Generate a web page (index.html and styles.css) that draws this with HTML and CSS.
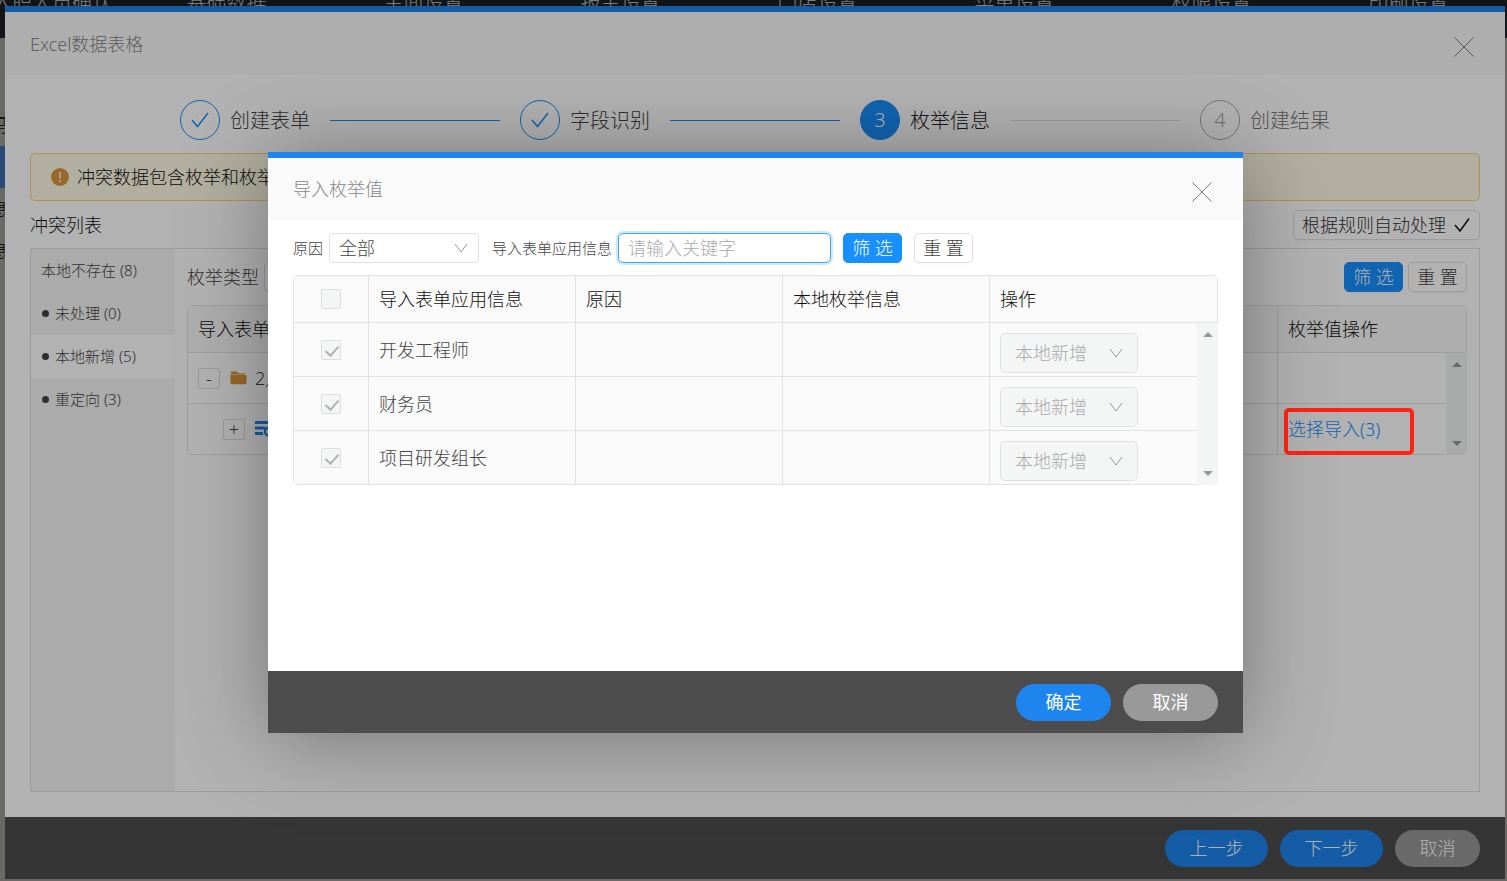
FILE: index.html
```html
<!DOCTYPE html>
<html lang="zh-CN">
<head>
    <meta charset="UTF-8">
    <meta name="viewport" content="width=device-width, initial-scale=1.0">
    <title>Excel数据表格</title>
    <link rel="stylesheet" href="styles.css">
</head>
<body>
    <!-- page under the dialogs -->
    <div class="page">
        <nav class="topnav">
            <a href="#" class="first">入职人员确认</a>
            <a href="#">基础数据</a>
            <a href="#">主面设置</a>
            <a href="#">报主设置</a>
            <a href="#">门店设置</a>
            <a href="#">菜单设置</a>
            <a href="#">权限设置</a>
            <a href="#">印刷设置</a>
        </nav>
        <ul class="page-side">
            <li>码</li>
            <li class="on"></li>
            <li>息</li>
            <li>息</li>
        </ul>
    </div>
    <div class="mask"></div>

    <!-- import wizard -->
    <div class="dialog wizard">
        <div class="dialog-head">
            <h2>Excel数据表格</h2>
            <button class="close" aria-label="关闭">
                <svg viewBox="0 0 20 20"><path d="M0.500 0.500 L19.500 19.500 M19.500 0.500 L0.500 19.500"/></svg>
            </button>
        </div>
        <div class="dialog-body">
            <ol class="steps">
                <li class="step done">
                    <span class="step-icon"><svg viewBox="0 0 20 20"><path d="M2 10 L7.500 16.500 L18 3"/></svg></span>
                    <span class="step-title">创建表单</span>
                </li>
                <li class="step done">
                    <span class="step-icon"><svg viewBox="0 0 20 20"><path d="M2 10 L7.500 16.500 L18 3"/></svg></span>
                    <span class="step-title">字段识别</span>
                </li>
                <li class="step active">
                    <span class="step-icon">3</span>
                    <span class="step-title">枚举信息</span>
                </li>
                <li class="step wait">
                    <span class="step-icon">4</span>
                    <span class="step-title">创建结果</span>
                </li>
            </ol>

            <div class="alert">
                <svg viewBox="0 0 18 18"><circle cx="9" cy="9" r="9" fill="#d9953b"/><path d="M9 4v6.500M9 12v2" stroke="#fffbe6" stroke-width="1.600"/></svg>
                冲突数据包含枚举和枚举值
            </div>

            <div class="list-head">
                <h3>冲突列表</h3>
                <button class="btn auto">根据规则自动处理
                    <svg viewBox="0 0 16 16"><path d="M1 8 L6 14 L15 1.500"/></svg>
                </button>
            </div>

            <div class="panel">
                <ul class="side">
                    <li>本地不存在 (8)</li>
                    <li class="sub">未处理 (0)</li>
                    <li class="sub on">本地新增 (5)</li>
                    <li class="sub">重定向 (3)</li>
                </ul>
                <div class="content">
                    <div class="filter">
                        <label for="enumType">枚举类型</label>
                        <select id="enumType" class="type-select"><option></option></select>
                        <button class="btn primary push">筛 选</button>
                        <button class="btn">重 置</button>
                    </div>
                    <table class="grid tree">
                        <colgroup><col><col class="c-op"><col class="c-scroll"></colgroup>
                        <thead>
                            <tr><th>导入表单</th><th colspan="2">枚举值操作</th></tr>
                        </thead>
                        <tbody>
                            <tr>
                                <td>
                                    <div class="node">
                                        <button class="toggle">-</button>
                                        <svg class="folder" viewBox="0 0 18 14"><path d="M1 0h6l2 2h7v1H1z M1.500 3.500H16a1.500 1.500 0 0 1 1.500 1.500v7a1.500 1.500 0 0 1-1.500 1.500H2A1.500 1.500 0 0 1 .5 12V4z" fill="#d9953b"/></svg>
                                        <span>2月</span>
                                    </div>
                                </td>
                                <td></td>
                                <td rowspan="2" class="scroll"><div class="bar"><i class="up"></i><i class="down"></i></div></td>
                            </tr>
                            <tr>
                                <td>
                                    <div class="node child">
                                        <button class="toggle">+</button>
                                        <svg class="find" viewBox="0 0 20 16"><path d="M0 1.500h18M0 7h10M0 12.500h8" stroke-width="3"/><circle cx="14" cy="10.500" r="4" stroke-width="2.500"/></svg>
                                    </div>
                                </td>
                                <td><a href="#">选择导入(3)</a></td>
                            </tr>
                        </tbody>
                    </table>
                </div>
            </div>
        </div>
        <div class="dialog-foot">
            <button class="pill wide">上一步</button>
            <button class="pill wide">下一步</button>
            <button class="pill gray narrow">取消</button>
        </div>
    </div>
    <div class="mask"></div>
    <!-- red frame round the import link -->
    <div class="marker"></div>

    <!-- enum value dialog -->
    <div class="dialog import">
        <div class="dialog-head">
            <h2>导入枚举值</h2>
            <button class="close" aria-label="关闭">
                <svg viewBox="0 0 20 20"><path d="M0.500 0.500 L19.500 19.500 M19.500 0.500 L0.500 19.500"/></svg>
            </button>
        </div>
        <div class="dialog-body">
            <div class="search">
                <label for="reason">原因</label>
                <span class="select reason">
                    <select id="reason"><option>全部</option></select>
                    <svg viewBox="0 0 14 10"><path d="M1 1 L7 9 L13 1"/></svg>
                </span>
                <label for="keyword">导入表单应用信息</label>
                <input id="keyword" class="keyword" type="text" placeholder="请输入关键字">
                <button class="btn primary">筛 选</button>
                <button class="btn">重 置</button>
            </div>
            <table class="grid values">
                <colgroup><col class="c-check"><col><col><col><col><col class="c-scroll"></colgroup>
                <thead>
                    <tr>
                        <th class="check"><input type="checkbox" aria-label="全选" disabled></th>
                        <th>导入表单应用信息</th>
                        <th>原因</th>
                        <th>本地枚举信息</th>
                        <th colspan="2">操作</th>
                    </tr>
                </thead>
                <tbody>
                    <tr>
                        <td class="check"><input type="checkbox" aria-label="开发工程师" checked disabled></td>
                        <td>开发工程师</td>
                        <td></td>
                        <td></td>
                        <td class="action">
                            <span class="select">
                                <select aria-label="操作" disabled><option>本地新增</option></select>
                                <svg viewBox="0 0 14 10"><path d="M1 1 L7 9 L13 1"/></svg>
                            </span>
                        </td>
                        <td rowspan="3" class="scroll"><div class="bar"><i class="up"></i><i class="down"></i></div></td>
                    </tr>
                    <tr>
                        <td class="check"><input type="checkbox" aria-label="财务员" checked disabled></td>
                        <td>财务员</td>
                        <td></td>
                        <td></td>
                        <td class="action">
                            <span class="select">
                                <select aria-label="操作" disabled><option>本地新增</option></select>
                                <svg viewBox="0 0 14 10"><path d="M1 1 L7 9 L13 1"/></svg>
                            </span>
                        </td>
                    </tr>
                    <tr>
                        <td class="check"><input type="checkbox" aria-label="项目研发组长" checked disabled></td>
                        <td>项目研发组长</td>
                        <td></td>
                        <td></td>
                        <td class="action">
                            <span class="select">
                                <select aria-label="操作" disabled><option>本地新增</option></select>
                                <svg viewBox="0 0 14 10"><path d="M1 1 L7 9 L13 1"/></svg>
                            </span>
                        </td>
                    </tr>
                </tbody>
            </table>
        </div>
        <div class="dialog-foot">
            <button class="pill">确定</button>
            <button class="pill gray">取消</button>
        </div>
    </div>
</body>
</html>
```
FILE: styles.css
```css
* {
    box-sizing: border-box;
}
body {
    margin: 0;
    height: 100vh;
    overflow: hidden;
    font-family: "Noto Sans", "Noto Sans CJK SC", sans-serif;
    font-weight: 300;
    font-size: 18px;
    line-height: 24px;
    color: #444;
}
h2, h3, ul, ol {
    margin: 0;
    padding: 0;
    font-size: 18px;
    font-weight: 300;
    list-style: none;
}
button, input, select {
    font: inherit;
    color: inherit;
    margin: 0;
}
a {
    color: #1890ff;
    text-decoration: none;
}
svg {
    fill: none;
    stroke-width: 1;
    flex: none;
}

/* page under the dialogs */
.page {
    height: 100%;
    background: #dbd7d1;
}
.topnav {
    display: flex;
    height: 38px;
    background: #27292f;
    line-height: 6px;
    font-size: 20px;
}
.topnav a {
    width: 197px;
    flex: none;
    text-align: center;
    color: #fff;
}
.topnav .first {
    width: 128px;
    padding-right: 16px;
    display: flex;
    justify-content: flex-end;
    white-space: nowrap;
}
.page-side {
    width: 10px;
    padding-top: 66px;
    color: #000;
}
.page-side li {
    height: 42px;
    line-height: 42px;
    width: 8px;
    overflow: hidden;
    display: flex;
    justify-content: flex-end;
}
.page-side .on {
    background: #5099f1;
}
.mask {
    position: fixed;
    inset: 0;
    background: rgba(0, 0, 0, .3);
}
.marker {
    position: fixed;
    top: 408px;
    right: 93px;
    width: 130px;
    height: 47px;
    border: 4px solid #ff2312;
    border-radius: 5px;
}

/* dialogs */
.dialog {
    position: fixed;
    display: flex;
    flex-direction: column;
    border-top: 6px solid #1f85ee;
    background: #fff;
}
.wizard {
    inset: 6px 2px 2px 5px;
}
.import {
    top: 152px;
    left: 5px;
    right: 1px;
    width: calc((100% - 7px) * .65);
    height: 66%;
    margin: 0 auto;
    box-shadow: 0 4px 80px rgba(0, 0, 0, .35);
}
.dialog-head {
    display: flex;
    justify-content: space-between;
    align-items: center;
    height: 63px;
    padding: 0 31px 0 25px;
    background: #fafafa;
    flex: none;
}
.import .dialog-head {
    height: 62px;
}
.dialog-head h2 {
    color: #888;
}
.close {
    display: flex;
    padding: 6px 0 0;
    border: 0;
    background: none;
}
.close svg {
    width: 20px;
    height: 20px;
    stroke: #7a7f86;
}
.dialog-body {
    flex: 1;
    display: flex;
    flex-direction: column;
    padding: 25px;
}
.import .dialog-body {
    padding-top: 13px;
}
.dialog-foot {
    display: flex;
    justify-content: flex-end;
    align-items: center;
    gap: 12px;
    height: 62px;
    padding: 0 25px;
    background: #4d4d4d;
    flex: none;
}
.pill {
    width: 95px;
    height: 37px;
    border: 0;
    border-radius: 19px;
    background: #1f85ee;
    color: #fff;
}
.import .pill {
    font-weight: 400;
}
.pill.wide {
    width: 103px;
}
.pill.narrow {
    width: 85px;
}
.pill.gray {
    background: #999;
}

/* steps */
.steps {
    display: flex;
    padding: 0 150px;
    font-size: 20px;
}
.step {
    display: flex;
    flex: 1;
    align-items: center;
    gap: 10px;
}
.step::after {
    content: "";
    flex: 1;
    height: 1px;
    margin: 0 20px 0 10px;
    background: #1890ff;
}
.step:last-child {
    flex: none;
}
.step:last-child::after {
    display: none;
}
.step-icon {
    display: flex;
    align-items: center;
    justify-content: center;
    width: 40px;
    height: 40px;
    border: 1px solid #1890ff;
    border-radius: 50%;
}
.step-title {
    padding-top: 2px;
}
.step-icon svg {
    width: 20px;
    height: 20px;
    stroke: #1890ff;
    stroke-width: 1.5;
}
.active {
    color: #222;
}
.active .step-icon {
    background: #1890ff;
    color: #fff;
}
.active::after {
    background: #e0e0e0;
}
.wait {
    color: #777;
}
.wait .step-icon {
    border-color: #aaa;
    color: #aaa;
}

.alert {
    display: flex;
    align-items: center;
    gap: 8px;
    height: 48px;
    margin-top: 13px;
    padding: 0 20px;
    border: 1px solid #fbd083;
    border-radius: 5px;
    background: #fffbe6;
    color: #111;
}
.alert svg {
    width: 18px;
    height: 18px;
}

.list-head {
    display: flex;
    justify-content: space-between;
    align-items: center;
    margin: 9px 0 8px;
}
.list-head h3 {
    color: #111;
}
.btn {
    height: 30px;
    min-width: 59px;
    padding: 0 8px;
    border: 1px solid #e0e0e0;
    border-radius: 5px;
    background: #fff;
    box-shadow: 0 2px 0 rgba(0, 0, 0, .02);
    white-space: nowrap;
}
.btn.primary {
    border-color: #1890ff;
    background: #1890ff;
    color: #fff;
}
.btn.auto {
    display: flex;
    align-items: center;
    gap: 8px;
    color: #333;
}
.auto svg {
    width: 16px;
    height: 16px;
    margin-right: 1px;
    stroke: #111;
    stroke-width: 1.5;
}

.panel {
    flex: 1;
    display: flex;
    border: 1px solid #e0e0e0;
}
.side {
    width: 144px;
    background: #f5f5f5;
    font-size: 15px;
}
.side li {
    height: 43px;
    padding-left: 10px;
    line-height: 43px;
}
.side .sub {
    display: flex;
    align-items: center;
    gap: 6px;
}
.side .sub::before {
    content: "";
    width: 7px;
    height: 7px;
    margin-left: 1px;
    border-radius: 50%;
    background: #444;
}
.side .on {
    background: #fff;
}
.content {
    flex: 1;
    padding: 13px 12px;
}
.filter {
    display: flex;
    align-items: center;
    gap: 5px;
}
.type-select {
    width: 150px;
    height: 30px;
    border: 1px solid #ddd;
    border-radius: 5px;
    background: #fff;
    appearance: none;
}
.push {
    margin-left: auto;
}

/* tables */
.grid {
    width: 100%;
    table-layout: fixed;
    border-spacing: 0;
    border: 1px solid #e2e2e2;
    border-width: 1px 0 0 1px;
    border-radius: 5px;
    overflow: hidden;
}
.grid th, .grid td {
    padding: 0 10px;
    border: 1px solid #e2e2e2;
    border-width: 0 1px 1px 0;
    font-weight: 300;
    text-align: left;
}
.grid th {
    height: 47px;
    background: #fafafa;
    color: #111;
}
.grid td:has(+ .scroll), .grid td:last-child {
    border-right: 0;
}
.c-scroll {
    width: 21px;
}
.grid .scroll {
    padding: 0;
    border: 0;
    height: 1px;
    background: #f3f4f4;
}
.bar {
    display: flex;
    flex-direction: column;
    justify-content: space-between;
    align-items: center;
    height: 100%;
    padding: 9px 0;
}
.bar i {
    border: 5px solid transparent;
}
.bar .up {
    border-top: 0;
    border-bottom-color: #999;
}
.bar .down {
    border-bottom: 0;
    border-top-color: #999;
}

.tree {
    margin-top: 13px;
}
.tree td {
    height: 51px;
}
.c-op {
    width: 168px;
}
.node {
    display: flex;
    align-items: center;
    gap: 8px;
}
.toggle {
    width: 22px;
    height: 21px;
    margin-right: 2px;
    padding: 0;
    border: 1px solid #ddd;
    border-radius: 2px;
    background: #fff;
    line-height: 16px;
}
.child {
    padding-left: 25px;
}
.folder {
    width: 17px;
    height: 14px;
}
.find {
    width: 20px;
    height: 16px;
    stroke: #1f85ee;
}

.search {
    display: flex;
    align-items: center;
    margin-bottom: 12px;
}
.search label {
    margin-right: 6px;
    font-size: 15px;
}
.search .btn {
    margin-left: 12px;
}
.select {
    position: relative;
    display: block;
}
.select select {
    width: 100%;
    height: 40px;
    padding: 0 14px;
    border: 1px solid #e0e0e0;
    border-radius: 5px;
    background: #fff;
    appearance: none;
}
.select select:disabled {
    background: #f4f5f5;
    color: #aaa;
    opacity: 1;
}
.select svg {
    position: absolute;
    top: 50%;
    right: 15px;
    width: 14px;
    height: 10px;
    margin-top: -5px;
    stroke: #999;
    pointer-events: none;
}
.reason {
    width: 150px;
    margin-right: 13px;
}
.reason select {
    display: block;
    height: 30px;
    padding: 0 9px;
}
.reason svg {
    right: 11px;
}
.keyword {
    width: 213px;
    height: 30px;
    padding: 0 9px;
    border: 1px solid #40a9ff;
    border-radius: 5px;
    outline: 0;
    box-shadow: 0 0 0 2px rgba(24, 144, 255, .2);
}
.keyword::placeholder {
    color: #aaa;
}

.values td {
    height: 54px;
    background: #fafafa;
}
.c-check {
    width: 75px;
}
.values .check {
    text-align: center;
}
.check input {
    appearance: none;
    display: block;
    width: 20px;
    height: 20px;
    margin: 0 auto;
    border: 1px solid #ddd;
    border-radius: 2px;
    background: #f4f5f5;
}
.check input:checked::before {
    content: "";
    display: block;
    width: 6px;
    height: 11px;
    margin: 2px 0 0 6px;
    border: solid #b0b0b0;
    border-width: 0 2px 2px 0;
    rotate: 42deg;
}
.values .action {
    padding-top: 6px;
}
.action .select {
    width: 138px;
}
.action select {
    display: block;
}
```
